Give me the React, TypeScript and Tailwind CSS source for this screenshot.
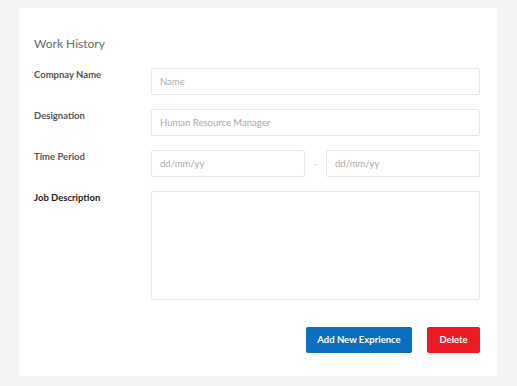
import React from 'react';

const inputCls =
  'h-[27px] w-full rounded-[2px] border border-[#e6e6e6] bg-white px-[8px] text-[9.5px] text-[#555] placeholder:text-[#ababab] outline-none';

const Label = ({ children, dark }: { children: React.ReactNode; dark?: boolean }) => (
  <div
    className={`w-[117px] shrink-0 pt-[1px] text-[9.5px] font-bold leading-[12px] ${dark ? 'text-[#222]' : 'text-[#555]'}`}
  >
    {children}
  </div>
);

export default function App() {
  return (
    <div className="min-h-[386px] w-full bg-[#f4f4f4] pt-[8px] pb-[10px] pl-[19px] pr-[20px]" style={{ fontFamily: 'Lato, sans-serif' }}>
      <div className="bg-white pt-[27px] pb-[23px] pl-[15px] pr-[17px]">
        <h2 className="text-[12px] leading-[18px] text-[#6a6a6a]">Work History</h2>

        <div className="mt-[15px] flex flex-col gap-[14px]">
          <div className="flex">
            <Label>Compnay Name</Label>
            <input className={inputCls} placeholder="Name" />
          </div>
          <div className="flex">
            <Label>Designation</Label>
            <input className={inputCls} placeholder="Human Resource Manager" />
          </div>
          <div className="flex">
            <Label>Time Period</Label>
            <div className="flex flex-1 items-center">
              <input className={inputCls} placeholder="dd/mm/yy" />
              <span className="w-[21px] shrink-0 text-center text-[9px] text-[#bbb]">-</span>
              <input className={inputCls} placeholder="dd/mm/yy" />
            </div>
          </div>
          <div className="flex">
            <Label dark>Job Description</Label>
            <textarea className="h-[109px] w-full resize-none rounded-[2px] border border-[#e6e6e6] bg-white px-[8px] py-[6px] text-[10px] outline-none" />
          </div>
        </div>

        <div className="mt-[27px] flex justify-end gap-[15px]">
          <button className="h-[26px] w-[106px] rounded-[2px] bg-[#0b6fbf] text-[9.5px] font-bold text-white">
            Add New Exprience
          </button>
          <button className="h-[26px] w-[53px] rounded-[2px] bg-[#ee1b24] text-[9.5px] font-bold text-white">
            Delete
          </button>
        </div>
      </div>
    </div>
  );
}
